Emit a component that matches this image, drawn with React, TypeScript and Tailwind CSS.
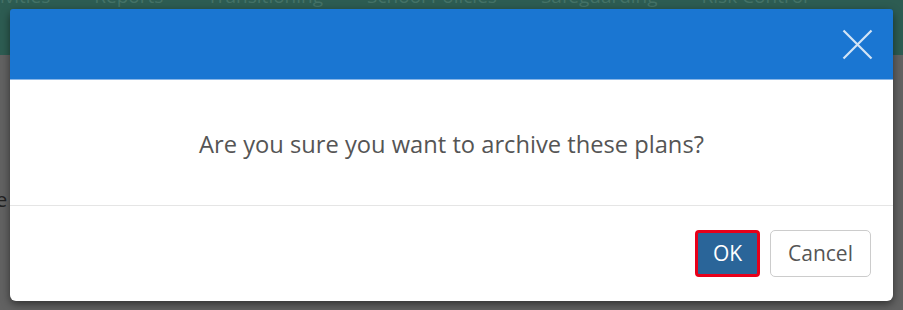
const navItems = ['Activities', 'Reports', 'Transitioning', 'School Policies', 'Safeguarding', 'Risk Control']

export default function App() {
  return (
    <div
      className="relative h-[310px] w-[903px] overflow-hidden bg-[#5e5e5e]"
      style={{ fontFamily: '"Open Sans", "Liberation Sans", sans-serif' }}
    >
      {/* dimmed page behind the dialog */}
      <div className="flex h-[55px] overflow-hidden bg-[#2d5c52] text-[19px] leading-none text-[#447267]">
        <div className="ml-[-28px] mt-[-13px] flex gap-[44px] whitespace-nowrap">
          {navItems.map((item) => (
            <span key={item}>{item}</span>
          ))}
        </div>
      </div>
      <div className="h-[255px] bg-[#626262] pt-[130px] text-[20px] text-[#222]">
        <span className="ml-[-4px]">e</span>
      </div>

      {/* dialog */}
      <div className="absolute left-[10px] top-[9px] flex h-[292px] w-[883px] flex-col rounded-md bg-white shadow-[0_3px_9px_rgba(0,0,0,0.5)]">
        <div className="flex h-[71px] items-start justify-end rounded-t-[3px] border-b border-[#8ab6e6] bg-[#1a76d2] pr-[20px] pt-[20px]">
          <button className="cursor-pointer">
            <svg width="31" height="31" viewBox="0 0 31 31" fill="none">
              <path d="M1.5 1.5 L29.5 29.5 M29.5 1.5 L1.5 29.5" stroke="#d3e4f6" strokeWidth="2.2" />
            </svg>
          </button>
        </div>
        <div className="flex h-[126px] items-center justify-center border-b border-[#e5e5e5] pt-[4px] text-[23.7px] text-[#555]">
          Are you sure you want to archive these plans?
        </div>
        <div className="flex flex-1 items-start justify-end gap-[10px] pr-[22px] pt-[24px]">
          <button className="h-[47px] w-[65px] cursor-pointer rounded-[4px] border-[3px] border-[#e8001a] bg-[#2a6599] text-[21px] text-white">
            OK
          </button>
          <button className="h-[47px] w-[101px] cursor-pointer rounded-[5px] border border-[#ccc] bg-white text-[21px] text-[#555]">
            Cancel
          </button>
        </div>
      </div>
    </div>
  )
}
